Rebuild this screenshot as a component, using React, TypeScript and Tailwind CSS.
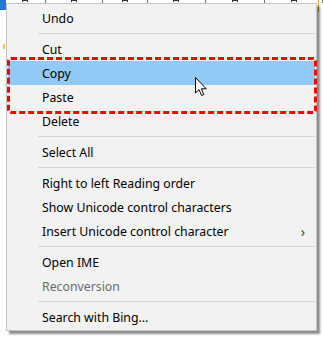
import React from 'react';

type Item =
  | { kind: 'item'; label: string; disabled?: boolean; sub?: boolean; active?: boolean }
  | { kind: 'sep' };

const items: Item[] = [
  { kind: 'item', label: 'Undo' },
  { kind: 'sep' },
  { kind: 'item', label: 'Cut' },
  { kind: 'item', label: 'Copy', active: true },
  { kind: 'item', label: 'Paste' },
  { kind: 'item', label: 'Delete' },
  { kind: 'sep' },
  { kind: 'item', label: 'Select All' },
  { kind: 'sep' },
  { kind: 'item', label: 'Right to left Reading order' },
  { kind: 'item', label: 'Show Unicode control characters' },
  { kind: 'item', label: 'Insert Unicode control character', sub: true },
  { kind: 'sep' },
  { kind: 'item', label: 'Open IME' },
  { kind: 'item', label: 'Reconversion', disabled: true },
  { kind: 'sep' },
  { kind: 'item', label: 'Search with Bing...' },
];

const Cursor: React.FC = () => (
  <svg width="13" height="20" viewBox="0 0 13 20" className="absolute left-[195px] top-[77px]">
    <path
      d="M0.5 0.5 L0.5 16 L4 12.6 L6.6 18.5 L8.8 17.5 L6.3 11.8 L11.2 11.8 Z"
      fill="#ffffff"
      stroke="#000000"
      strokeWidth="1"
      strokeLinejoin="miter"
    />
  </svg>
);

const App: React.FC = () => {
  return (
    <div className="relative w-[323px] h-[339px] bg-white overflow-hidden font-['Noto_Sans',sans-serif] text-[12.3px]">
      {/* bits of the window behind */}
      <div className="absolute left-0 top-0 w-[6px] h-[10px] bg-[#1e78d7]" />
      <div className="absolute left-[3px] top-[44px] w-[2px] h-[5px] bg-[#f0c060]" />
      <div className="absolute left-[6px] top-0 w-[317px] h-[3px] flex">
        {[40, 58, 45, 58, 60, 58].map((w, i) => (
          <div key={i} style={{ width: w }} className="h-full border-r border-[#777] flex justify-center">
            <div className="w-[6px] h-[2px] border-t border-x border-[#333]" />
          </div>
        ))}
      </div>
      <div className="absolute right-0 top-0 w-[5px] h-[12px] border-l border-[#e0a030]" />

      <div className="pt-[3px] pl-[6px]">
        <div className="relative w-[311px] bg-[#f2f2f2] border border-[#c4c4c4] pt-[2px] pb-[1px] shadow-[3px_3px_2px_rgba(0,0,0,0.45)]">
          {items.map((it, i) =>
            it.kind === 'sep' ? (
              <div key={i} className="h-[7px] flex items-center pl-[31px] pr-[1px]">
                <div className="h-px w-full bg-[#d5d5d5]" />
              </div>
            ) : (
              <div
                key={i}
                className={`h-[24px] mx-[1px] flex items-center pt-[2px] pl-[34px] pr-[10px] ${
                  it.active ? 'bg-[#91c9f7]' : ''
                } ${it.disabled ? 'text-[#6d6d6d]' : 'text-black'}`}
              >
                <span className="flex-1 leading-none">{it.label}</span>
                {it.sub && <span className="text-[#444] text-[14px] leading-none">›</span>}
              </div>
            )
          )}
          <div className="absolute left-0 top-[53px] w-[310px] h-[57px] border-[3px] border-dashed border-[#ff0000] rounded-[4px]" />
        </div>
      </div>
      <Cursor />
    </div>
  );
};

export default App;
